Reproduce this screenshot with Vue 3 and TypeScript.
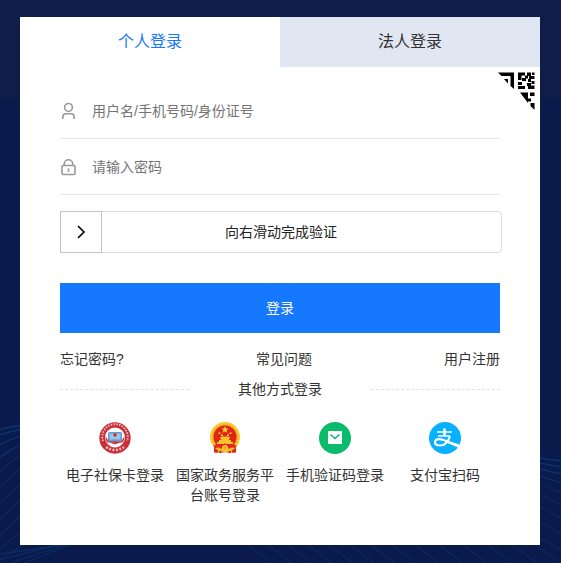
<script setup lang="ts">
import { ref } from 'vue'

type TabKey = 'personal' | 'corporate'

const tabs: { key: TabKey; label: string }[] = [
  { key: 'personal', label: '个人登录' },
  { key: 'corporate', label: '法人登录' },
]
const activeTab = ref<TabKey>('personal')
const account = ref('')
const password = ref('')
const slide = ref(0)

const leftWaves = [
  'M0 430Q10 426 20 426', 'M0 435Q10 431 20 430', 'M0 445Q10 439 20 436', 'M0 457Q10 450 20 445',
  'M0 471Q10 462 20 455', 'M0 487Q10 477 20 468', 'M0 503Q10 493 20 484', 'M0 519L20 500',
  'M0 535L20 516', 'M0 549L20 532', 'M0 560L30 540', 'M0 554L70 544', 'M0 560L60 544', 'M10 563L66 545', 'M24 563L70 545',
]
const rightWaves = [
  'M540 458L561 461', 'M540 463L561 467', 'M540 469L561 474', 'M540 476L561 483', 'M540 484L561 493',
  'M540 495L561 505', 'M540 507L561 518', 'M540 522L561 534', 'M540 538L561 550',
]
const bottomWaves = [248, 268, 288, 308, 329, 350, 371, 392, 415, 439, 463, 488, 513, 536]
</script>

<template>
  <main class="page">
    <svg class="waves" viewBox="0 0 561 563" preserveAspectRatio="none" aria-hidden="true">
      <g fill="none" stroke="#0b397c" stroke-width="1.3">
        <path v-for="(d, i) in leftWaves" :key="d" :d="d" :opacity="i < 4 ? 0.9 : 0.5" />
        <path v-for="(d, i) in rightWaves" :key="d" :d="d" :opacity="i < 4 ? 0.8 : 0.5" />
        <path v-for="x in bottomWaves" :key="x" :d="`M${x} 545l24 18`" opacity=".45" />
      </g>
    </svg>

    <section class="card">
      <div class="tabs" role="tablist">
        <button
          v-for="tab in tabs"
          :key="tab.key"
          type="button"
          role="tab"
          class="tab"
          :class="{ active: activeTab === tab.key }"
          :aria-selected="activeTab === tab.key"
          @click="activeTab = tab.key"
        >{{ tab.label }}</button>
      </div>

      <button type="button" class="qr" aria-label="扫码登录">
        <svg width="38" height="38" viewBox="0 0 38 38">
          <path d="M0 .5h16v16.500l-3.500-3V4H3.500z" />
          <path d="M6 7h4v4.500z" />
          <path d="M20 .5h7v3h-3.500V8H20zM29 .5h4V4h-4zM34 .5h2.500V3H34zM24 6h4v3h-4zM27 3.500h3v3h-3zM31 4h5.500v3H31zM30 7h3v3h-3zM33.500 9h3v3h-3zM20 10h4v3h-4zM20 14h7v3h-7zM29 11h4v3h-4zM30 13.500h6.500V17H30z" />
          <path d="M22 20.500h8V31zM32 20.500h4.500v3.500H32zM30 26.500h3v3h-3zM32.500 31h4v7l-4-4z" />
        </svg>
      </button>

      <form class="form" @submit.prevent>
        <div class="field">
          <label for="account" aria-label="用户名">
            <svg width="16" height="18" viewBox="0 0 16 18" fill="none" stroke="#999" stroke-width="1.6">
              <circle cx="8.5" cy="5.4" r="3.9" />
              <path d="M2.800 17v-2.200c0-2 1.300-3 3-3h5.400c1.700 0 3 1 3 3V17" />
            </svg>
          </label>
          <input id="account" v-model="account" type="text" placeholder="用户名/手机号码/身份证号" />
        </div>
        <div class="field">
          <label for="password" aria-label="密码">
            <svg width="16" height="18" viewBox="0 0 16 18" fill="none" stroke="#999" stroke-width="1.6">
              <rect x="2" y="7.500" width="13" height="9" rx="1" />
              <path d="M4.300 7.500V6a4.200 4.200 0 0 1 8.400 0v1.500M8.500 10.500v3.500" />
            </svg>
          </label>
          <input id="password" v-model="password" type="password" placeholder="请输入密码" />
        </div>

        <div class="slider">
          <label for="slide">向右滑动完成验证</label>
          <input id="slide" v-model.number="slide" type="range" min="0" max="100" />
        </div>

        <button type="submit" class="submit">登录</button>
      </form>

      <nav class="links">
        <a href="#forgot">忘记密码?</a>
        <a href="#faq">常见问题</a>
        <a href="#register">用户注册</a>
      </nav>

      <div class="divider"><span>其他方式登录</span></div>

      <div class="methods">
        <a class="method" href="#social-card">
          <svg width="32" height="32" viewBox="0 0 32 32" aria-hidden="true">
            <circle cx="16" cy="16" r="15.700" fill="#c92e38" />
            <path d="M4 19A12.700 12.700 0 1 1 28 19" fill="none" stroke="#f0bcc0" stroke-width="2" stroke-dasharray="1.500 1.300" />
            <circle cx="16" cy="15.500" r="10" fill="#fff" />
            <path d="M6.500 14q0 8 6.500 9.500h6q6.500-1.500 6.500-9.500l-3 5h-13z" fill="#d0353f" />
            <rect x="9" y="10" width="14" height="9.500" rx="1.500" fill="#5e9bd3" />
            <rect x="10.500" y="11.500" width="11" height="6" fill="#9fc5e6" />
            <circle cx="16" cy="13" r="1.700" fill="#d8232e" />
            <path d="M8 20l4 1 4 1.500 4-1.500 4-1-3 3-5 1.500-5-1.500z" fill="#fff" />
            <path d="M7 25q9 6 18 0" fill="none" stroke="#eebfc2" stroke-width="2.500" stroke-dasharray="2 1.500" />
          </svg>
          <span>电子社保卡登录</span>
        </a>
        <a class="method" href="#gov">
          <svg width="32" height="32" viewBox="0 0 32 32" aria-hidden="true">
            <path d="M5 22h22v8.500l-6 .5-5-1-5 1-6-.5z" fill="#d9251c" />
            <circle cx="16" cy="15" r="13.200" fill="#df2419" stroke="#f4b51d" stroke-width="3.400" />
            <circle cx="16" cy="15" r="14" fill="none" stroke="#f9d84b" stroke-width="1.500" stroke-dasharray="2 1" />
            <path d="M16 4l1 2.500h2.700l-2.200 1.600.8 2.600-2.300-1.500-2.300 1.500.8-2.600-2.200-1.600H15z" fill="#ffdf2b" />
            <path d="M9.500 10.500h2v1.500h-2zM12 12.500h2V14h-2zM18 12.500h2V14h-2zM20.500 10.500h2v1.500h-2z" fill="#ffd72c" />
            <path d="M11 15.500l2-1h6l2 1v1h-1V18h2v2h2v2H8v-2h2v-2h2v-1.500h-1z" fill="#f8c626" />
            <path d="M5 25q5-2 7 0l4-2 4 2q3-2 7 0" fill="none" stroke="#e32c1d" stroke-width="3" />
            <circle cx="16" cy="26" r="2.500" fill="#edaa20" stroke="#f9df59" />
            <path d="M9.500 26v5M22.500 26v5M12 28l4 2 4-2" fill="none" stroke="#f1b820" stroke-width="1.300" />
          </svg>
          <span>国家政务服务平台账号登录</span>
        </a>
        <a class="method" href="#sms">
          <svg width="32" height="32" viewBox="0 0 32 32" aria-hidden="true">
            <circle cx="16" cy="16" r="16" fill="#0abb6c" />
            <rect x="9" y="9" width="14" height="13" rx=".5" fill="#fff" />
            <path d="M11.500 12.500l4.500 4 4.500-4" fill="none" stroke="#0abb6c" stroke-width="1.500" />
          </svg>
          <span>手机验证码登录</span>
        </a>
        <a class="method" href="#alipay">
          <svg width="32" height="32" viewBox="0 0 32 32" aria-hidden="true">
            <circle cx="16" cy="16" r="16" fill="#06b1ff" />
            <g fill="none" stroke="#fff">
              <path d="M8 10h15M9 14h12" stroke-width="1.700" />
              <path d="M15.500 6.500V14" stroke-width="2.600" />
              <path d="M21 14c-1.500 5-5 9.500-10 9.500-3 0-5-1.300-5-3.200s1.800-3.200 4.500-3.200c4 0 9 3.200 18.800 7.100" stroke-width="2.200" />
            </g>
            <path d="M19 19l11.500 3.500-1.500 3L17.500 20.500z" fill="#fff" />
          </svg>
          <span>支付宝扫码</span>
        </a>
      </div>
    </section>
  </main>
</template>

<style>
body {
  background: #0a1a4a;
}
</style>

<style scoped>
.page {
  position: relative;
  box-sizing: border-box;
  min-height: 100vh;
  padding: 17px 21px 18px 20px;
  background: linear-gradient(#101d49 0 98px, #0a1a4a 98px);
  color: #333;
  font: 14px/20px "Liberation Sans", "Noto Sans CJK SC", sans-serif;
}

.waves {
  position: absolute;
  inset: 0;
  width: 100%;
  height: 100%;
}

.card {
  position: relative;
  box-sizing: border-box;
  padding-bottom: 40px;
  background: #fff;
}

button,
input {
  margin: 0;
  padding: 0;
  border: 0;
  background: none;
  color: inherit;
  font: inherit;
}

button {
  cursor: pointer;
}

a {
  color: inherit;
  text-decoration: none;
}

svg {
  display: block;
}

.tabs {
  display: grid;
  grid-template-columns: 1fr 1fr;
}

.tab {
  height: 50px;
  background: #e0e6f2;
  font-size: 16px;
}

.tab.active {
  background: #fff;
  color: #1677ff;
}

.qr {
  position: absolute;
  top: 55px;
  right: 4px;
}

.form {
  display: flex;
  flex-direction: column;
  padding: 16px 40px 0;
}

.field {
  display: flex;
  align-items: center;
  gap: 16px;
  height: 55px;
  border-bottom: 1px solid #e5e5e5;
}

.field input {
  flex: 1;
  min-width: 0;
  height: 40px;
  outline: none;
}

.field input::placeholder {
  color: #757575;
  opacity: 1;
}

.slider {
  display: grid;
  box-sizing: border-box;
  height: 42px;
  margin: 16px -2px 0 0;
  border: 1px solid #ddd;
  border-radius: 4px;
}

.slider label,
.slider input {
  grid-area: 1 / 1;
}

.slider label {
  align-self: center;
  text-align: center;
  color: #222;
}

.slider input {
  z-index: 1;
  height: 42px;
  margin: -1px;
  appearance: none;
  outline: none;
}

.slider input::-webkit-slider-thumb {
  box-sizing: border-box;
  width: 42px;
  height: 42px;
  appearance: none;
  border: 1px solid #c4c4c4;
  background: #fff url("data:image/svg+xml,%3Csvg xmlns='http://www.w3.org/2000/svg' width='16' height='16'%3E%3Cpath d='M5 2l6 6-6 6' fill='none' stroke='%23000' stroke-width='1.6'/%3E%3C/svg%3E") center no-repeat;
}

.submit {
  height: 50px;
  margin-top: 30px;
  background: #1677ff;
  color: #fff;
}

.links {
  display: flex;
  justify-content: space-between;
  padding: 16px 40px 0;
}

.divider {
  display: flex;
  align-items: center;
  justify-content: space-between;
  padding: 10px 40px 0;
}

.divider::before,
.divider::after {
  width: 129px;
  border-top: 1px dashed #e2e2e2;
  content: "";
}

.methods {
  display: grid;
  grid-template-columns: repeat(4, 1fr);
  padding: 23px 40px 0;
}

.method {
  display: flex;
  flex-direction: column;
  align-items: center;
  gap: 11px;
  padding: 0 5px;
  text-align: center;
}
</style>
